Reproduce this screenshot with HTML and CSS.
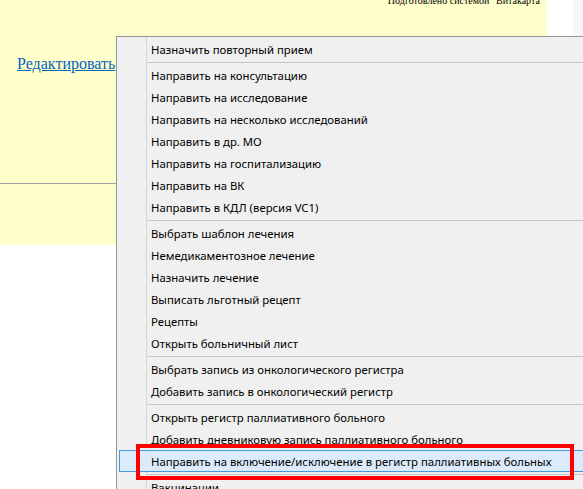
FILE: index.html
```
<!DOCTYPE html>
<html lang="ru">
<head>
<meta charset="utf-8">
<title>Меню</title>
<link rel="stylesheet" href="styles.css">
</head>
<body>
<div class="page">
  <div class="main">
    <div class="sheet">
      <div class="credit">Подготовлено системой "Витакарта"</div>
      <div class="edit-row"><a class="edit-link" href="#">Редактировать</a></div>
      <div class="rule"></div>
    </div>
  </div>
  <div class="scroll-strip"></div>
</div>

<div class="menu">
  <div class="item">Назначить повторный прием</div>
  <div class="sep"></div>
  <div class="item">Направить на консультацию</div>
  <div class="item">Направить на исследование</div>
  <div class="item">Направить на несколько исследований</div>
  <div class="item">Направить в др. МО</div>
  <div class="item">Направить на госпитализацию</div>
  <div class="item">Направить на ВК</div>
  <div class="item">Направить в КДЛ (версия VC1)</div>
  <div class="sep"></div>
  <div class="item">Выбрать шаблон лечения</div>
  <div class="item">Немедикаментозное лечение</div>
  <div class="item">Назначить лечение</div>
  <div class="item">Выписать льготный рецепт</div>
  <div class="item">Рецепты</div>
  <div class="item">Открыть больничный лист</div>
  <div class="sep"></div>
  <div class="item">Выбрать запись из онкологического регистра</div>
  <div class="item">Добавить запись в онкологический регистр</div>
  <div class="sep"></div>
  <div class="item">Открыть регистр паллиативного больного</div>
  <div class="item">Добавить дневниковую запись паллиативного больного</div>
  <div class="item item-hot">Направить на включение/исключение в регистр паллиативных больных</div>
  <div class="sep"></div>
  <div class="item">Вакцинации</div>
</div>

<div class="callout"></div>
</body>
</html>
```

FILE: styles.css
```
html, body {
  margin: 0;
  padding: 0;
  width: 583px;
  height: 489px;
  overflow: hidden;
  background: #ffffff;
}

.page {
  display: flex;
  width: 583px;
  height: 489px;
}

.main {
  width: 573px;
  background: #ffffff;
}

.scroll-strip {
  width: 10px;
  background: #f7f7f7;
}

.sheet {
  width: 547px;
  height: 245px;
  background: #ffffcc;
  font-family: "Liberation Serif", serif;
  color: #000;
  overflow: hidden;
}

.credit {
  font-size: 10px;
  line-height: 10px;
  text-align: right;
  padding-right: 3px;
  margin-top: -4px;
  height: 10px;
}

.edit-row {
  padding-left: 17px;
  margin-top: 48px;
  font-size: 16px;
  line-height: 20px;
}

.edit-link {
  color: #0563c1;
  text-decoration: underline;
}

.rule {
  margin-top: 109px;
  height: 1px;
  background: #a0a0a4;
}

.menu {
  position: absolute;
  left: 116px;
  top: 36px;
  width: 520px;
  border: 1px solid #979797;
  background-color: #f0f0f0;
  background-image: linear-gradient(to right, transparent 29px, #d7d7d7 29px, #d7d7d7 30px, transparent 30px);
  padding: 1px 0 20px 0;
  font-family: "Noto Sans", sans-serif;
  font-size: 11.35px;
  color: #000;
}

.item {
  height: 22px;
  line-height: 22px;
  margin-left: 2px;
  padding-left: 32px;
  white-space: nowrap;
  border: 1px solid transparent;
  border-left: 0;
  border-right: 0;
  box-sizing: border-box;
}

.item-hot {
  background: #dcebfc;
  border: 1px solid #3d9be0;
  padding-left: 31px;
}

.sep {
  height: 4px;
  margin-left: 30px;
  background: linear-gradient(to bottom, transparent 2px, #c6c6c6 2px, #c6c6c6 3px, transparent 3px);
}

.callout {
  position: absolute;
  left: 136px;
  top: 444px;
  width: 438px;
  height: 36px;
  box-sizing: border-box;
  border: 4px solid #ff0000;
}
```
